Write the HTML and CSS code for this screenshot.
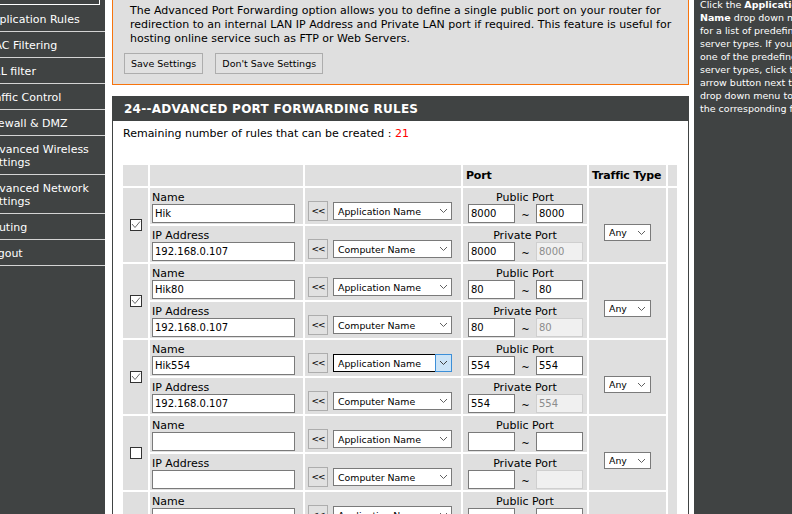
FILE: index.html
```html
<!DOCTYPE html>
<html lang="en">
<head>
<meta charset="utf-8">
<title>Advanced Port Forwarding</title>
<link rel="stylesheet" href="styles.css">
</head>
<body>
<div class="page">
  <nav class="sidebar">
    <div class="menu-current"></div>
    <a class="item first">Application Rules</a>
    <a class="item">MAC Filtering</a>
    <a class="item">URL filter</a>
    <a class="item">Traffic Control</a>
    <a class="item">Firewall &amp; DMZ</a>
    <a class="item">Advanced Wireless<br>Settings</a>
    <a class="item">Advanced Network<br>Settings</a>
    <a class="item">Routing</a>
    <a class="item">Logout</a>
  </nav>

  <main class="content">
    <section class="intro">
      <p>The Advanced Port Forwarding option allows you to define a single public port on your router for<br>redirection to an internal LAN IP Address and Private LAN port if required. This feature is useful for<br>hosting online service such as FTP or Web Servers.</p>
      <div class="actions">
        <button class="btn">Save Settings</button>
        <button class="btn">Don't Save Settings</button>
      </div>
    </section>

    <section class="box">
      <h2 class="box-title">24--ADVANCED PORT FORWARDING RULES</h2>
      <div class="box-body">
        <p class="remaining">Remaining number of rules that can be created : <span class="red">21</span></p>
        <table class="rules">
          <colgroup>
            <col class="w-check"><col class="w-name"><col class="w-pick"><col class="w-port"><col class="w-traffic"><col class="w-extra">
          </colgroup>
          <thead>
            <tr class="head">
              <td></td><td></td><td></td><td class="th">Port</td><td class="th">Traffic Type</td><td></td>
            </tr>
          </thead>
          <tbody>
            <!-- rule 1 -->
            <tr class="sub">
              <td rowspan="2" class="c-check"><span class="cb"><svg width="10" height="10" viewBox="0 0 10 10"><polyline points="1,4 4,7.5 9,1.5" fill="none" stroke="#6b6b6b" stroke-width="1"/></svg></span></td>
              <td><div class="lbl">Name</div><input class="txt" value="Hik"></td>
              <td class="c-pick"><div class="pick"><button class="arrow">&lt;&lt;</button><span class="sel"><select class="dd app"><option>Application Name</option></select><svg class="chev" width="7" height="4" viewBox="0 0 7 4"><polyline points="0,0 3.5,3.5 7,0" fill="none" stroke="#606060" stroke-width="1"/></svg></span></div></td>
              <td><div class="lbl c">Public Port</div><div class="ports"><input class="port" value="8000"><span class="tilde">~</span><input class="port" value="8000"></div></td>
              <td rowspan="2" class="c-traffic"><div class="traffic"><span class="sel"><select class="dd any"><option>Any</option></select><svg class="chev r6" width="7" height="4" viewBox="0 0 7 4"><polyline points="0,0 3.5,3.5 7,0" fill="none" stroke="#606060" stroke-width="1"/></svg></span></div></td>
              <td rowspan="10" class="c-extra"></td>
            </tr>
            <tr class="sub">
              <td><div class="lbl">IP Address</div><input class="txt" value="192.168.0.107"></td>
              <td class="c-pick"><div class="pick"><button class="arrow">&lt;&lt;</button><span class="sel"><select class="dd app"><option>Computer Name</option></select><svg class="chev" width="7" height="4" viewBox="0 0 7 4"><polyline points="0,0 3.5,3.5 7,0" fill="none" stroke="#606060" stroke-width="1"/></svg></span></div></td>
              <td><div class="lbl c">Private Port</div><div class="ports"><input class="port" value="8000"><span class="tilde">~</span><input class="port off" value="8000" disabled></div></td>
            </tr>

            <!-- rule 2 -->
            <tr class="sub">
              <td rowspan="2" class="c-check"><span class="cb"><svg width="10" height="10" viewBox="0 0 10 10"><polyline points="1,4 4,7.5 9,1.5" fill="none" stroke="#6b6b6b" stroke-width="1"/></svg></span></td>
              <td><div class="lbl">Name</div><input class="txt" value="Hik80"></td>
              <td class="c-pick"><div class="pick"><button class="arrow">&lt;&lt;</button><span class="sel"><select class="dd app"><option>Application Name</option></select><svg class="chev" width="7" height="4" viewBox="0 0 7 4"><polyline points="0,0 3.5,3.5 7,0" fill="none" stroke="#606060" stroke-width="1"/></svg></span></div></td>
              <td><div class="lbl c">Public Port</div><div class="ports"><input class="port" value="80"><span class="tilde">~</span><input class="port" value="80"></div></td>
              <td rowspan="2" class="c-traffic"><div class="traffic"><span class="sel"><select class="dd any"><option>Any</option></select><svg class="chev r6" width="7" height="4" viewBox="0 0 7 4"><polyline points="0,0 3.5,3.5 7,0" fill="none" stroke="#606060" stroke-width="1"/></svg></span></div></td>
            </tr>
            <tr class="sub">
              <td><div class="lbl">IP Address</div><input class="txt" value="192.168.0.107"></td>
              <td class="c-pick"><div class="pick"><button class="arrow">&lt;&lt;</button><span class="sel"><select class="dd app"><option>Computer Name</option></select><svg class="chev" width="7" height="4" viewBox="0 0 7 4"><polyline points="0,0 3.5,3.5 7,0" fill="none" stroke="#606060" stroke-width="1"/></svg></span></div></td>
              <td><div class="lbl c">Private Port</div><div class="ports"><input class="port" value="80"><span class="tilde">~</span><input class="port off" value="80" disabled></div></td>
            </tr>

            <!-- rule 3 -->
            <tr class="sub">
              <td rowspan="2" class="c-check"><span class="cb"><svg width="10" height="10" viewBox="0 0 10 10"><polyline points="1,4 4,7.5 9,1.5" fill="none" stroke="#6b6b6b" stroke-width="1"/></svg></span></td>
              <td><div class="lbl">Name</div><input class="txt" value="Hik554"></td>
              <td class="c-pick"><div class="pick"><button class="arrow">&lt;&lt;</button><span class="sel focus"><select class="dd app"><option>Application Name</option></select><span class="drop"></span><svg class="chev" width="7" height="4" viewBox="0 0 7 4"><polyline points="0,0 3.5,3.5 7,0" fill="none" stroke="#404040" stroke-width="1"/></svg></span></div></td>
              <td><div class="lbl c">Public Port</div><div class="ports"><input class="port" value="554"><span class="tilde">~</span><input class="port" value="554"></div></td>
              <td rowspan="2" class="c-traffic"><div class="traffic"><span class="sel"><select class="dd any"><option>Any</option></select><svg class="chev r6" width="7" height="4" viewBox="0 0 7 4"><polyline points="0,0 3.5,3.5 7,0" fill="none" stroke="#606060" stroke-width="1"/></svg></span></div></td>
            </tr>
            <tr class="sub">
              <td><div class="lbl">IP Address</div><input class="txt" value="192.168.0.107"></td>
              <td class="c-pick"><div class="pick"><button class="arrow">&lt;&lt;</button><span class="sel"><select class="dd app"><option>Computer Name</option></select><svg class="chev" width="7" height="4" viewBox="0 0 7 4"><polyline points="0,0 3.5,3.5 7,0" fill="none" stroke="#606060" stroke-width="1"/></svg></span></div></td>
              <td><div class="lbl c">Private Port</div><div class="ports"><input class="port" value="554"><span class="tilde">~</span><input class="port off" value="554" disabled></div></td>
            </tr>

            <!-- rule 4 -->
            <tr class="sub">
              <td rowspan="2" class="c-check"><span class="cb"></span></td>
              <td><div class="lbl">Name</div><input class="txt" value=""></td>
              <td class="c-pick"><div class="pick"><button class="arrow">&lt;&lt;</button><span class="sel"><select class="dd app"><option>Application Name</option></select><svg class="chev" width="7" height="4" viewBox="0 0 7 4"><polyline points="0,0 3.5,3.5 7,0" fill="none" stroke="#606060" stroke-width="1"/></svg></span></div></td>
              <td><div class="lbl c">Public Port</div><div class="ports"><input class="port" value=""><span class="tilde">~</span><input class="port" value=""></div></td>
              <td rowspan="2" class="c-traffic"><div class="traffic"><span class="sel"><select class="dd any"><option>Any</option></select><svg class="chev r6" width="7" height="4" viewBox="0 0 7 4"><polyline points="0,0 3.5,3.5 7,0" fill="none" stroke="#606060" stroke-width="1"/></svg></span></div></td>
            </tr>
            <tr class="sub">
              <td><div class="lbl">IP Address</div><input class="txt" value=""></td>
              <td class="c-pick"><div class="pick"><button class="arrow">&lt;&lt;</button><span class="sel"><select class="dd app"><option>Computer Name</option></select><svg class="chev" width="7" height="4" viewBox="0 0 7 4"><polyline points="0,0 3.5,3.5 7,0" fill="none" stroke="#606060" stroke-width="1"/></svg></span></div></td>
              <td><div class="lbl c">Private Port</div><div class="ports"><input class="port" value=""><span class="tilde">~</span><input class="port off" value="" disabled></div></td>
            </tr>

            <!-- rule 5 -->
            <tr class="sub">
              <td rowspan="2" class="c-check"><span class="cb"></span></td>
              <td><div class="lbl">Name</div><input class="txt" value=""></td>
              <td class="c-pick"><div class="pick"><button class="arrow">&lt;&lt;</button><span class="sel"><select class="dd app"><option>Application Name</option></select><svg class="chev" width="7" height="4" viewBox="0 0 7 4"><polyline points="0,0 3.5,3.5 7,0" fill="none" stroke="#606060" stroke-width="1"/></svg></span></div></td>
              <td><div class="lbl c">Public Port</div><div class="ports"><input class="port" value=""><span class="tilde">~</span><input class="port" value=""></div></td>
              <td rowspan="2" class="c-traffic"><div class="traffic"><span class="sel"><select class="dd any"><option>Any</option></select><svg class="chev r6" width="7" height="4" viewBox="0 0 7 4"><polyline points="0,0 3.5,3.5 7,0" fill="none" stroke="#606060" stroke-width="1"/></svg></span></div></td>
            </tr>
            <tr class="sub">
              <td><div class="lbl">IP Address</div><input class="txt" value=""></td>
              <td class="c-pick"><div class="pick"><button class="arrow">&lt;&lt;</button><span class="sel"><select class="dd app"><option>Computer Name</option></select><svg class="chev" width="7" height="4" viewBox="0 0 7 4"><polyline points="0,0 3.5,3.5 7,0" fill="none" stroke="#606060" stroke-width="1"/></svg></span></div></td>
              <td><div class="lbl c">Private Port</div><div class="ports"><input class="port" value=""><span class="tilde">~</span><input class="port off" value="" disabled></div></td>
            </tr>
          </tbody>
        </table>
      </div>
    </section>
  </main>

  <aside class="help">
    <p>Click the <b>Application</b><br><b>Name</b> drop down menu<br>for a list of predefined<br>server types. If you select<br>one of the predefined<br>server types, click the<br>arrow button next to the<br>drop down menu to fill out<br>the corresponding field.</p>
  </aside>
</div>
</body>
</html>
```

FILE: styles.css
```css
* { box-sizing: border-box; }

html, body {
  margin: 0;
  padding: 0;
  height: 100%;
  overflow: hidden;
  background: #fff;
}

body {
  font-family: "DejaVu Sans", Verdana, sans-serif;
  font-size: 11px;
  color: #000;
}

.page {
  display: flex;
  align-items: stretch;
  margin-left: -21px;
  min-height: 514px;
}

/* ---------- left menu ---------- */
.sidebar {
  flex: 0 0 126px;
  background: #404343;
}

.menu-current {
  height: 5px;
  border: 1px solid #fff;
  border-top: 0;
  margin-right: 5px;
}

.item {
  display: block;
  padding: 7px 0 5px 6px;
  line-height: 13px;
  color: #fff;
  border-bottom: 1px solid #d4d4d4;
  white-space: nowrap;
}

.item.first { padding-top: 8px; }

/* ---------- main column ---------- */
.content {
  flex: 0 0 577px;
  margin-left: 7px;
}

.intro {
  background: #dfdfdf;
  border: 1px solid #f7740d;
  border-top: 0;
  padding: 4px 11px 10px;
}

.intro p {
  margin: 0 0 0 6px;
  line-height: 14px;
  white-space: nowrap;
}

.actions {
  display: flex;
  gap: 12px;
  margin-top: 7px;
}

.btn {
  height: 21px;
  padding: 0 6px;
  background: #e1e1e1;
  border: 1px solid #adadad;
  font: 9.5px "DejaVu Sans", sans-serif;
  color: #000;
}

.box {
  margin-top: 11px;
  border: 1px solid #404343;
  border-top: 0;
}

.box-title {
  margin: 0 -1px;
  height: 25px;
  padding: 1px 0 0 12px;
  background: #404343;
  color: #fff;
  font-size: 12px;
  font-weight: bold;
  line-height: 24px;
  letter-spacing: 0.25px;
}

.box-body {
  padding: 6px 0 0 10px;
}

.remaining {
  margin: 0;
  line-height: 14px;
}

.red { color: #f00; }

/* ---------- rules table ---------- */
.rules {
  border-collapse: separate;
  border-spacing: 2px;
  table-layout: fixed;
  width: 558px;
  margin: 22px 0 0 -2px;
}

.w-check { width: 25px; }
.w-name { width: 153px; }
.w-pick { width: 156px; }
.w-port { width: 124px; }
.w-traffic { width: 77px; }
.w-extra { width: 9px; }

.rules td {
  background: #dfdfdf;
  padding: 0;
  vertical-align: top;
}

.head td {
  height: 21px;
  vertical-align: middle;
}

.th {
  font-weight: bold;
  line-height: 14px;
  padding-left: 3px !important;
  letter-spacing: -0.2px;
}

.sub td { height: 36px; }

.lbl {
  padding: 4px 0 0 2px;
  line-height: 12px;
  height: 16px;
  white-space: nowrap;
}

.lbl.c {
  text-align: center;
  padding-left: 0;
}

.txt {
  display: block;
  width: 143px;
  height: 19px;
  margin-left: 2px;
  padding: 0 2px;
  border: 1px solid #7a7a7a;
  background: #fff;
  font: 10px "DejaVu Sans", sans-serif;
  color: #000;
}

.c-check { vertical-align: middle !important; }

.cb {
  display: flex;
  align-items: center;
  justify-content: center;
  width: 12px;
  height: 12px;
  margin-left: 7px;
  border: 1px solid #333;
  background: #fff;
}

.c-pick { vertical-align: bottom !important; }

.pick {
  display: flex;
  align-items: center;
  gap: 5px;
  padding-left: 3px;
  margin-bottom: 3px;
}

.arrow {
  width: 20px;
  height: 20px;
  padding: 0;
  background: #e1e1e1;
  border: 1px solid #adadad;
  font: 9px "DejaVu Sans", sans-serif;
  letter-spacing: -1px;
  color: #000;
}

.sel {
  position: relative;
  display: inline-block;
}

.dd {
  appearance: none;
  -webkit-appearance: none;
  display: block;
  margin: 0;
  padding: 0 0 0 4px;
  border: 1px solid #7a7a7a;
  border-radius: 0;
  background: #fff;
  font: 9.4px "DejaVu Sans", sans-serif;
  color: #000;
}

.dd.app { width: 119px; height: 18px; }
.dd.any { width: 47px; height: 17px; }

.chev {
  position: absolute;
  right: 5px;
  top: 50%;
  margin-top: -2px;
  pointer-events: none;
}

.chev.r6 { right: 6px; }

.sel.focus .dd { border-color: #000; }

.drop {
  position: absolute;
  right: 0;
  top: 0;
  width: 17px;
  height: 18px;
  background: #cce4f7;
  border: 1px solid #3c8fd8;
  pointer-events: none;
}

.ports {
  display: flex;
  align-items: center;
  padding-left: 5px;
}

.port {
  width: 47px;
  height: 19px;
  padding: 0 2px;
  border: 1px solid #7a7a7a;
  background: #fff;
  font: 10px "DejaVu Sans", sans-serif;
  color: #000;
}

.port.off {
  background: #f0f0f0;
  border-color: #cfcfcf;
  color: #8c8c8c;
}

.tilde {
  width: 21px;
  text-align: center;
  font-size: 10px;
  padding-top: 3px;
}

.traffic {
  display: flex;
  justify-content: center;
  padding-top: 36px;
}

/* ---------- help column ---------- */
.help {
  flex: 0 0 160px;
  margin-left: 5px;
  padding-left: 6px;
  background: #404343;
  color: #fff;
  font-size: 9.5px;
  line-height: 13px;
  white-space: nowrap;
  overflow: hidden;
}

.help p { margin: -2px 0 0; }
```
